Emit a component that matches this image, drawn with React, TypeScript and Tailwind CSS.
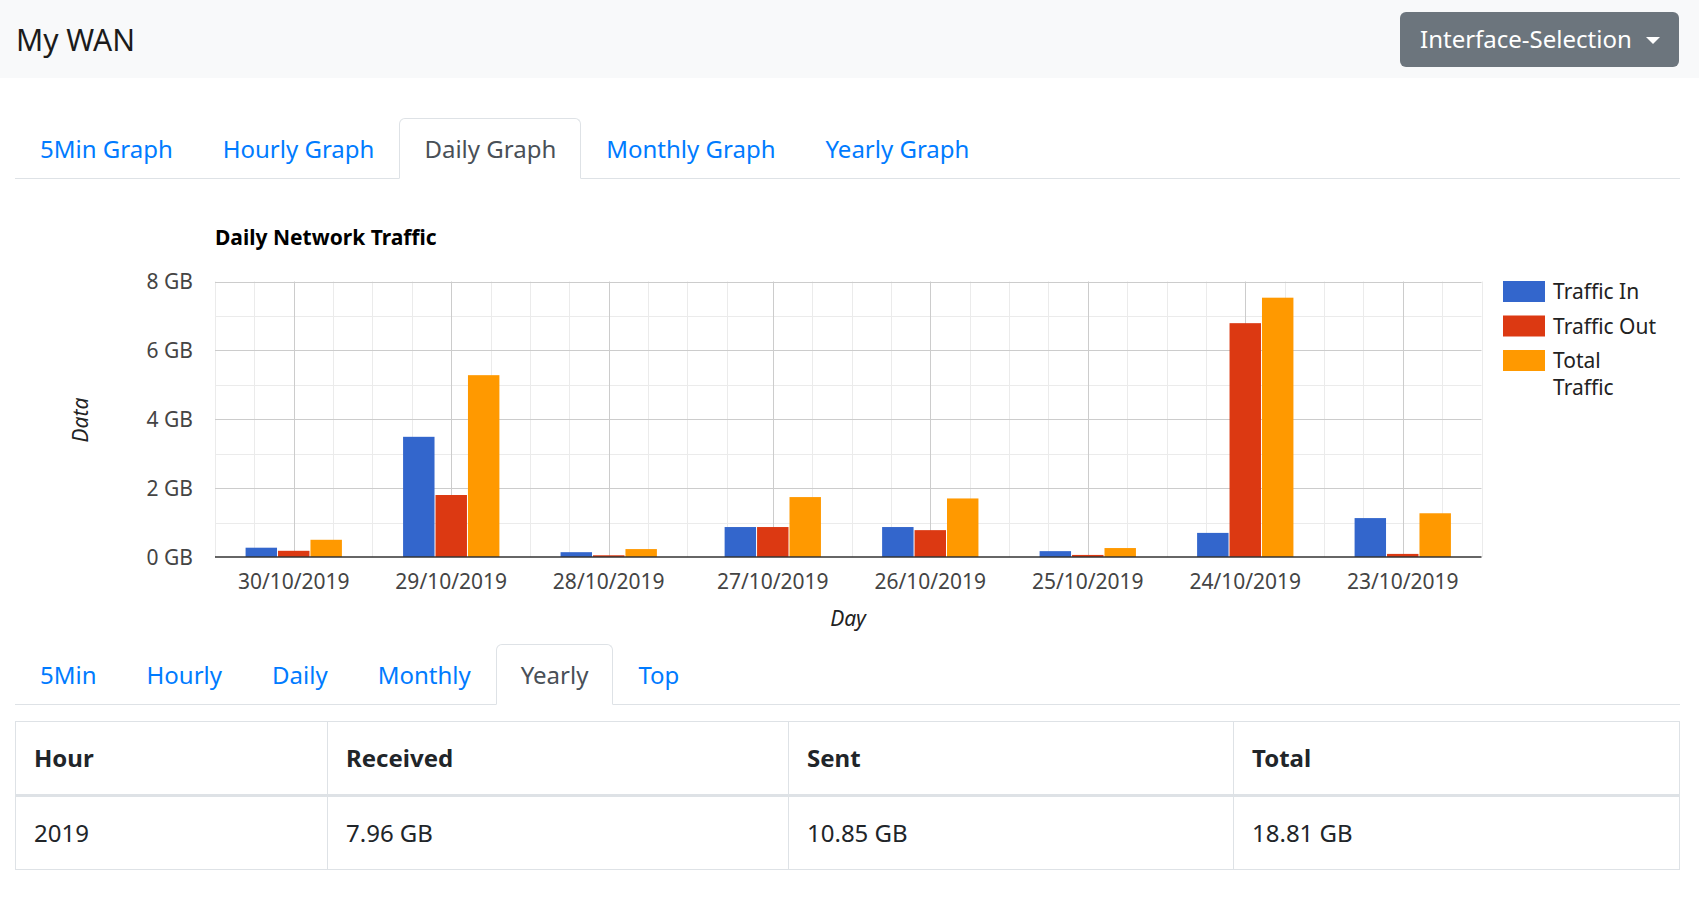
import React from "react";

const FONT = "font-['Noto_Sans','Open_Sans',sans-serif]";

// hour = position on the time axis, counted from the left edge of the plot
// (27/10/2019 has 25 hours, the clocks went back that night)
type Day = { label: string; hour: number; inb: number; outb: number; total: number };

const days: Day[] = [
    { label: "30/10/2019", hour: 12, inb: 0.27, outb: 0.18, total: 0.5 },
    { label: "29/10/2019", hour: 36, inb: 3.49, outb: 1.8, total: 5.28 },
    { label: "28/10/2019", hour: 60, inb: 0.14, outb: 0.05, total: 0.23 },
    { label: "27/10/2019", hour: 85, inb: 0.87, outb: 0.87, total: 1.74 },
    { label: "26/10/2019", hour: 109, inb: 0.87, outb: 0.78, total: 1.7 },
    { label: "25/10/2019", hour: 133, inb: 0.17, outb: 0.06, total: 0.26 },
    { label: "24/10/2019", hour: 157, inb: 0.7, outb: 6.79, total: 7.53 },
    { label: "23/10/2019", hour: 181, inb: 1.13, outb: 0.09, total: 1.27 },
];

const COLORS = ["#3366cc", "#dc3912", "#ff9900"];

function Tabs({ items, active }: { items: string[]; active: string }) {
    return (
        <ul className="flex border-b border-[#dee2e6]">
            {items.map((t) => (
                <li key={t} className="-mb-px">
                    <span
                        className={
                            t === active
                                ? "block px-[24px] py-[11.5px] text-[24px] leading-[36px] border border-[#dee2e6] border-b-white rounded-t-[6px] bg-white text-[#495057]"
                                : "block px-[24px] py-[11.5px] text-[24px] leading-[36px] border border-transparent rounded-t-[6px] text-[#007bff]"
                        }
                    >
                        {t}
                    </span>
                </li>
            ))}
        </ul>
    );
}

function DailyChart() {
    const L = 200;
    const R = 1466.5;
    const T = 102.5;
    const B = 378;
    const HOURS = 193;
    const perGb = (B - T) / 8;
    const perHour = (R - L) / HOURS;
    const slot = (24 * perHour * 0.618) / 3;

    const px = (v: number) => Math.round(v) + 0.5;
    const hx = (h: number) => L + h * perHour;

    const majors = days.map((d) => d.hour);
    const minors: number[] = [];
    for (let h = 0; h <= 78; h += 6) minors.push(h);
    for (let h = 85; h <= HOURS; h += 6) minors.push(h);
    const minorOnly = minors.filter((h) => !majors.includes(h));

    const hLines = Array.from({ length: 9 }, (_, v) => v);

    return (
        <svg width={1665} height={465} className="block">
            {/* minor grid */}
            {minorOnly.map((h) => (
                <line key={"vm" + h} x1={px(hx(h))} x2={px(hx(h))} y1={T} y2={B} stroke="#ebebeb" />
            ))}
            {hLines
                .filter((v) => v % 2 === 1)
                .map((v) => (
                    <line key={"hm" + v} x1={L} x2={R} y1={px(B - v * perGb)} y2={px(B - v * perGb)} stroke="#ebebeb" />
                ))}
            {/* major grid */}
            {majors.map((h) => (
                <line key={"vM" + h} x1={px(hx(h))} x2={px(hx(h))} y1={T} y2={B} stroke="#cccccc" />
            ))}
            {hLines
                .filter((v) => v % 2 === 0 && v > 0)
                .map((v) => (
                    <line key={"hM" + v} x1={L} x2={R} y1={px(B - v * perGb)} y2={px(B - v * perGb)} stroke="#cccccc" />
                ))}

            {/* bars */}
            {days.map((d) => {
                const start = hx(d.hour) - slot * 1.5;
                return [d.inb, d.outb, d.total].map((v, k) => {
                    const h = v * perGb;
                    return (
                        <rect
                            key={d.label + k}
                            x={start + k * slot + 0.5}
                            y={B - h}
                            width={slot - 1}
                            height={h}
                            fill={COLORS[k]}
                        />
                    );
                });
            })}

            {/* baseline */}
            <line x1={L} x2={R} y1={B} y2={B} stroke="#333333" strokeWidth={1.5} />

            {/* title */}
            <text x={L} y={66} fontSize={21} fontWeight={700} fill="#000">
                Daily Network Traffic
            </text>

            {/* y axis */}
            {hLines
                .filter((v) => v % 2 === 0)
                .map((v) => (
                    <text key={"yl" + v} x={178} y={B - v * perGb + 7.5} fontSize={21} fill="#444" textAnchor="end">
                        {v} GB
                    </text>
                ))}
            <text
                x={65.5}
                y={248.5}
                fontSize={21}
                fontStyle="italic"
                fill="#222"
                textAnchor="middle"
                transform="rotate(-90 65.5 241)"
            >
                Data
            </text>

            {/* x axis */}
            {days.map((d) => (
                <text key={"xl" + d.label} x={hx(d.hour)} y={410} fontSize={21} fill="#444" textAnchor="middle">
                    {d.label}
                </text>
            ))}
            <text x={833} y={447} fontSize={21} fontStyle="italic" fill="#222" textAnchor="middle">
                Day
            </text>

            {/* legend */}
            <rect x={1488} y={102} width={42} height={21} fill={COLORS[0]} />
            <text x={1538} y={120} fontSize={21} fill="#222">Traffic In</text>
            <rect x={1488} y={136.5} width={42} height={21} fill={COLORS[1]} />
            <text x={1538} y={154.5} fontSize={21} fill="#222">Traffic Out</text>
            <rect x={1488} y={171} width={42} height={21} fill={COLORS[2]} />
            <text x={1538} y={189} fontSize={21} fill="#222">Total</text>
            <text x={1538} y={216} fontSize={21} fill="#222">Traffic</text>
        </svg>
    );
}

export default function App() {
    return (
        <div className={`${FONT} bg-white min-h-[910px] text-[#212529]`}>
            {/* Navbar */}
            <div className="h-[78px] bg-[#f8f9fa] flex items-center justify-between pl-[16px] pr-[20px]">
                <span className="text-[30px] leading-[45px] text-[#1b1b1b]">My WAN</span>
                <button className="h-[55px] w-[279px] bg-[#6c757d] rounded-[6px] text-white text-[24px] flex items-center pl-[20px] gap-[14px]">
                    <span>Interface-Selection</span>
                    <span className="w-0 h-0 border-l-[7px] border-r-[7px] border-t-[7px] border-l-transparent border-r-transparent border-t-white mt-[2px]" />
                </button>
            </div>

            <div className="pl-[15px] pr-[19px]">
                <div className="mt-[40px]">
                    <Tabs
                        items={["5Min Graph", "Hourly Graph", "Daily Graph", "Monthly Graph", "Yearly Graph"]}
                        active="Daily Graph"
                    />
                </div>

                <DailyChart />

                <Tabs items={["5Min", "Hourly", "Daily", "Monthly", "Yearly", "Top"]} active="Yearly" />

                <table className="mt-[16px] w-full border-collapse border border-[#dee2e6] text-[24px] leading-[36px]">
                    <thead>
                        <tr>
                            <th className="w-[312px] text-left font-bold px-[18px] py-[18px] border border-[#dee2e6] border-b-[3px]">Hour</th>
                            <th className="w-[461px] text-left font-bold px-[18px] py-[18px] border border-[#dee2e6] border-b-[3px]">Received</th>
                            <th className="w-[445px] text-left font-bold px-[18px] py-[18px] border border-[#dee2e6] border-b-[3px]">Sent</th>
                            <th className="text-left font-bold px-[18px] py-[18px] border border-[#dee2e6] border-b-[3px]">Total</th>
                        </tr>
                    </thead>
                    <tbody>
                        <tr>
                            <td className="px-[18px] py-[18px] border border-[#dee2e6]">2019</td>
                            <td className="px-[18px] py-[18px] border border-[#dee2e6]">7.96 GB</td>
                            <td className="px-[18px] py-[18px] border border-[#dee2e6]">10.85 GB</td>
                            <td className="px-[18px] py-[18px] border border-[#dee2e6]">18.81 GB</td>
                        </tr>
                    </tbody>
                </table>
            </div>
        </div>
    );
}
